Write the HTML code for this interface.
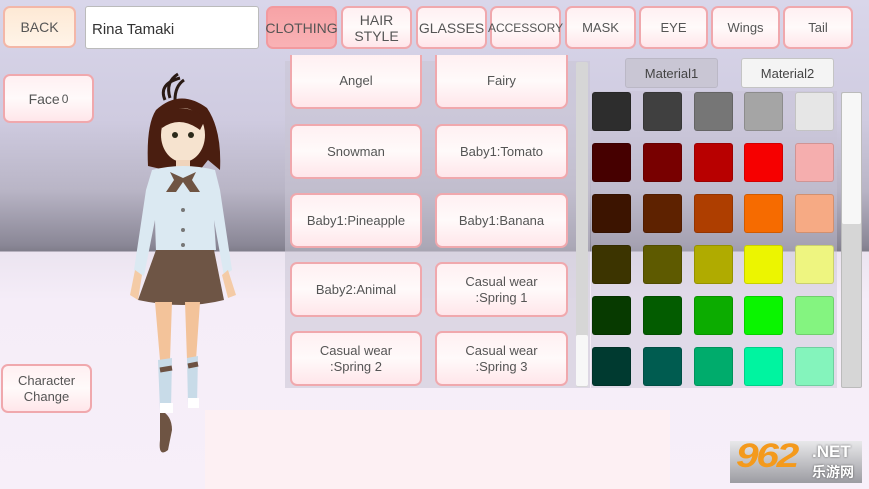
<!DOCTYPE html>
<html><head><meta charset="utf-8"><style>
*{margin:0;padding:0;box-sizing:border-box}
body{width:869px;height:489px;overflow:hidden;position:relative;font-family:"Liberation Sans","Noto Sans CJK SC",sans-serif;color:#555;
background:linear-gradient(to bottom,#d9d6ea 0px,#cfcbe0 120px,#b9b5c6 190px,#8a8796 245px,#7f7d8a 251px,#ebe4f0 252px,#f5edf8 300px,#f7eff9 489px)}
.b{position:absolute;display:flex;align-items:center;justify-content:center;text-align:center;border:2px solid #f0a8ad;border-radius:7px;
background:linear-gradient(#fff0f2,#fffafa 50%,#ffe6ea);font-size:13px;line-height:16px;color:#555}
.tab{top:6px;height:43px;font-size:13px}
.sw{position:absolute;width:39px;height:39px;border-radius:3px;border:1px solid rgba(0,0,0,.15)}
</style></head><body>
<div class="b" style="left:3px;top:6px;width:73px;height:42px;background:linear-gradient(#fde9d5,#fff4e8);border-color:#f3b7a8;font-size:14px">BACK</div>
<div style="position:absolute;left:85px;top:6px;width:174px;height:43px;background:#fff;border:1px solid #bbb;border-radius:3px;font-size:15px;color:#333;padding:14px 0 0 6px">Rina Tamaki</div>
<div class="b tab" style="left:266px;width:71px;background:linear-gradient(#f7a3a6,#f9b2b5);border-color:#f29a9f;font-size:14px">CLOTHING</div>
<div class="b tab" style="left:341px;width:71px;font-size:14px">HAIR<br>STYLE</div>
<div class="b tab" style="left:416px;width:71px;font-size:14px">GLASSES</div>
<div class="b tab" style="left:490px;width:71px;font-size:12px">ACCESSORY</div>
<div class="b tab" style="left:565px;width:71px">MASK</div>
<div class="b tab" style="left:639px;width:69px">EYE</div>
<div class="b tab" style="left:711px;width:69px">Wings</div>
<div class="b tab" style="left:783px;width:70px">Tail</div>
<div class="b" style="left:3px;top:74px;width:91px;height:49px;font-size:14px">Face<sup style="font-size:12px;margin-left:2px;vertical-align:4px">0</sup></div>
<div class="b" style="left:1px;top:364px;width:91px;height:49px">Character<br>Change</div>

<svg style="position:absolute;left:120px;top:70px" width="130" height="390" viewBox="0 0 130 390">
<path d="M45 30 Q38 14 60 8 M50 28 Q45 12 58 4 M55 30 Q55 16 64 10" stroke="#2a1a14" stroke-width="3" fill="none"/>
<path d="M36 40 Q60 18 87 38 Q102 60 100 100 L88 90 L80 100 L45 100 L28 96 Q26 55 36 40Z" fill="#4a1e10"/>
<ellipse cx="63" cy="65" rx="22" ry="27" fill="#f6e3cf"/>
<path d="M40 45 Q62 30 86 48 L80 60 Q60 45 42 58Z" fill="#4a1e10"/>
<circle cx="55" cy="65" r="3" fill="#2b2a1a"/><circle cx="71" cy="65" r="3" fill="#2b2a1a"/>
<rect x="56" y="90" width="14" height="10" fill="#f0d4bc"/>
<path d="M32 100 Q63 92 95 100 L100 120 L112 200 L104 206 L94 150 L96 180 L36 182 L35 150 L24 206 L14 200 L26 120Z" fill="#dbe9f2"/>
<path d="M50 102 L63 108 L76 102 L72 110 L80 122 L70 122 L63 112 L56 122 L46 122 L54 110Z" fill="#6f5443"/>
<circle cx="63" cy="140" r="2" fill="#777"/><circle cx="63" cy="160" r="2" fill="#777"/><circle cx="63" cy="175" r="2" fill="#777"/>
<path d="M36 180 L94 180 L104 230 Q65 240 18 230Z" fill="#6e5545"/>
<path d="M15 200 L10 225 L18 230 L22 205Z M108 200 L116 225 L108 228 L102 205Z" fill="#f4cba6"/>
<path d="M35 232 L52 232 L50 290 L40 290Z M65 232 L80 232 L76 290 L67 290Z" fill="#f3c39a"/>
<path d="M38 290 L52 288 L51 340 L40 340Z M67 288 L78 286 L77 335 L68 335Z" fill="#c8dbe8"/>
<path d="M40 300 L52 298 M68 296 L78 294" stroke="#6d5243" stroke-width="5"/>
<path d="M40 340 Q52 345 52 360 L48 380 Q38 388 40 370Z" fill="#6e5443"/>
<rect x="40" y="333" width="13" height="10" fill="#fff"/><rect x="68" y="328" width="11" height="10" fill="#fff"/>
</svg>

<div style="position:absolute;left:285px;top:61px;width:305px;height:327px;background:rgba(200,196,212,.55)"></div>
<div style="position:absolute;left:576px;top:62px;width:12px;height:325px;background:#d6d6d6;border-radius:2px"></div>
<div style="position:absolute;left:576px;top:335px;width:12px;height:51px;background:#f7f7f7;border-radius:2px"></div>
<div class="b" style="left:290px;top:55px;width:132px;height:54px;border-top:none;border-radius:0 0 8px 8px;padding-top:0">Angel</div>
<div class="b" style="left:435px;top:55px;width:133px;height:54px;border-top:none;border-radius:0 0 8px 8px">Fairy</div>
<div class="b" style="left:290px;top:124px;width:132px;height:55px">Snowman</div>
<div class="b" style="left:435px;top:124px;width:133px;height:55px">Baby1:Tomato</div>
<div class="b" style="left:290px;top:193px;width:132px;height:55px">Baby1:Pineapple</div>
<div class="b" style="left:435px;top:193px;width:133px;height:55px">Baby1:Banana</div>
<div class="b" style="left:290px;top:262px;width:132px;height:55px">Baby2:Animal</div>
<div class="b" style="left:435px;top:262px;width:133px;height:55px">Casual wear<br>:Spring 1</div>
<div class="b" style="left:290px;top:331px;width:132px;height:55px">Casual wear<br>:Spring 2</div>
<div class="b" style="left:435px;top:331px;width:133px;height:55px">Casual wear<br>:Spring 3</div>

<div style="position:absolute;left:625px;top:58px;width:93px;height:30px;background:#c9c6d4;border:1px solid #bbb8c6;border-radius:3px;font-size:13px;text-align:center;line-height:29px;color:#444">Material1</div>
<div style="position:absolute;left:741px;top:58px;width:93px;height:30px;background:#f4f4f4;border:1px solid #c4c4c4;border-radius:3px;font-size:13px;text-align:center;line-height:29px;color:#444">Material2</div>
<div style="position:absolute;left:591px;top:91px;width:246px;height:297px;background:rgba(200,196,212,.45)"></div>
<div style="position:absolute;left:841px;top:92px;width:21px;height:296px;background:#d6d6d6;border:1px solid #bbb;border-radius:2px"></div>
<div style="position:absolute;left:842px;top:93px;width:19px;height:131px;background:#f7f7f7;border-radius:2px"></div>
<div class="sw" style="left:592px;top:92px;background:#2d2d2d"></div><div class="sw" style="left:643px;top:92px;background:#404040"></div><div class="sw" style="left:694px;top:92px;background:#767676"></div><div class="sw" style="left:744px;top:92px;background:#a5a5a5"></div><div class="sw" style="left:795px;top:92px;background:#e6e6e6"></div>
<div class="sw" style="left:592px;top:143px;background:#460000"></div><div class="sw" style="left:643px;top:143px;background:#780000"></div><div class="sw" style="left:694px;top:143px;background:#b80000"></div><div class="sw" style="left:744px;top:143px;background:#f60000"></div><div class="sw" style="left:795px;top:143px;background:#f5aeae"></div>
<div class="sw" style="left:592px;top:194px;background:#3c1400"></div><div class="sw" style="left:643px;top:194px;background:#5e2200"></div><div class="sw" style="left:694px;top:194px;background:#ae3e00"></div><div class="sw" style="left:744px;top:194px;background:#f66b00"></div><div class="sw" style="left:795px;top:194px;background:#f6aa84"></div>
<div class="sw" style="left:592px;top:245px;background:#3c3400"></div><div class="sw" style="left:643px;top:245px;background:#5e5a00"></div><div class="sw" style="left:694px;top:245px;background:#b0ab00"></div><div class="sw" style="left:744px;top:245px;background:#ecf500"></div><div class="sw" style="left:795px;top:245px;background:#eef580"></div>
<div class="sw" style="left:592px;top:296px;background:#073a00"></div><div class="sw" style="left:643px;top:296px;background:#035c00"></div><div class="sw" style="left:694px;top:296px;background:#0cac00"></div><div class="sw" style="left:744px;top:296px;background:#0af500"></div><div class="sw" style="left:795px;top:296px;background:#84f480"></div>
<div class="sw" style="left:592px;top:347px;background:#003a30"></div><div class="sw" style="left:643px;top:347px;background:#005c50"></div><div class="sw" style="left:694px;top:347px;background:#00ac6c"></div><div class="sw" style="left:744px;top:347px;background:#00f4a0"></div><div class="sw" style="left:795px;top:347px;background:#84f4bc"></div>

<div style="position:absolute;left:205px;top:410px;width:465px;height:79px;background:#fdf0f3"></div>
<div style="position:absolute;left:730px;top:441px;width:132px;height:42px;background:linear-gradient(#e8e8ea,#9c9ca2);"></div>
<div style="position:absolute;left:736px;top:437px;font:italic bold 34px 'Liberation Sans',sans-serif;color:#f49a1c;letter-spacing:-2px;transform:scaleX(1.2);transform-origin:left">962</div>
<div style="position:absolute;left:812px;top:442px;font:bold 17px 'Liberation Sans',sans-serif;color:#fff;text-shadow:0 0 2px #555">.NET</div>
<div style="position:absolute;left:812px;top:462px;font:bold 14px 'Noto Sans CJK SC',sans-serif;color:#fff;text-shadow:0 0 2px #555">乐游网</div>
</body></html>
